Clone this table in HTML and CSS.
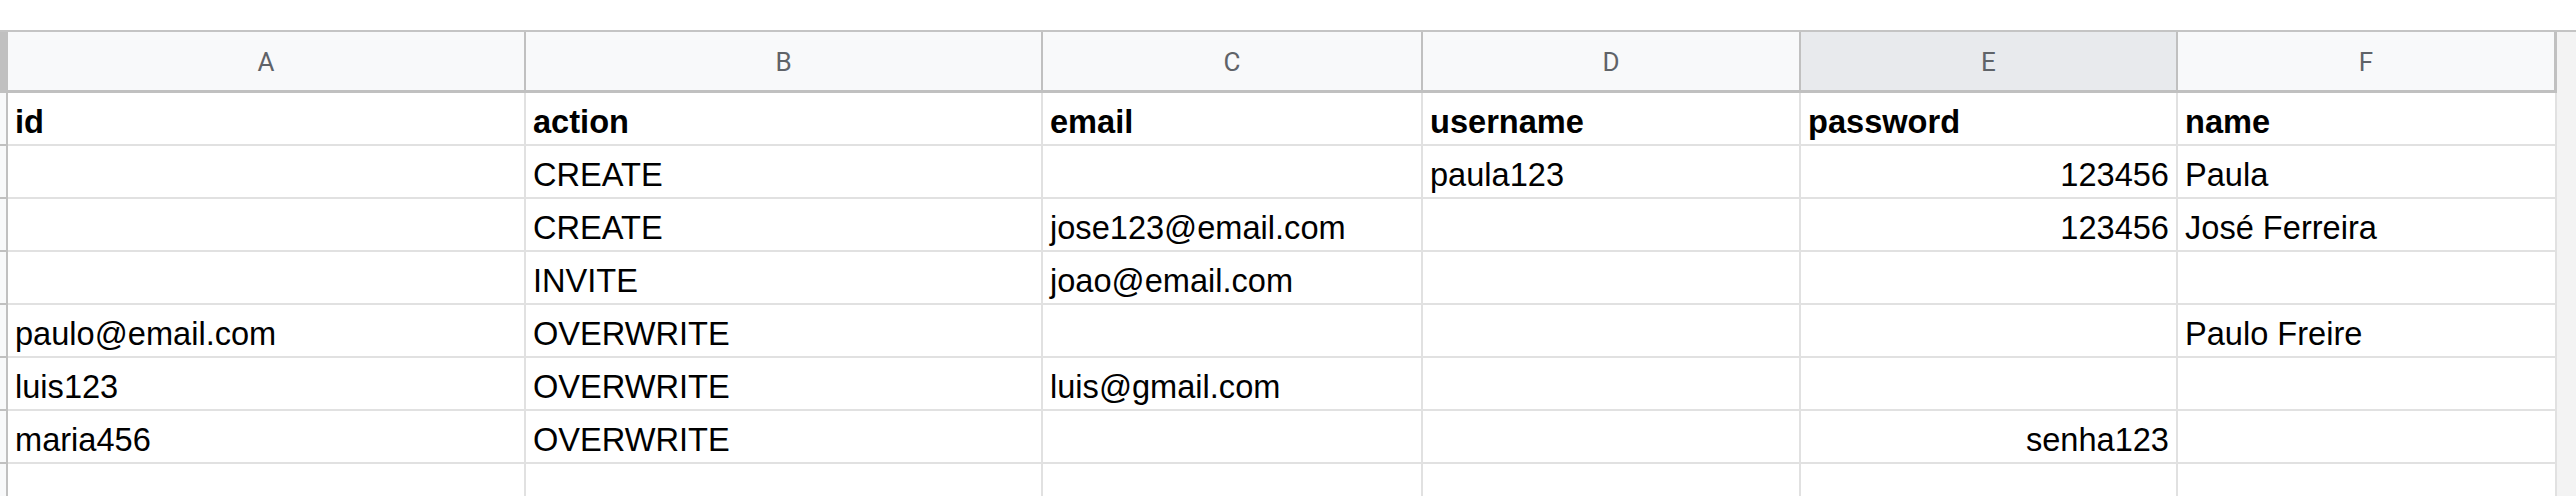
FILE: index.html
```html
<!DOCTYPE html>
<html>
<head>
<meta charset="utf-8">
<link rel="stylesheet" href="styles.css">
</head>
<body>
<div class="sheet">
  <div class="corner"></div>
  <div class="colhead">A</div>
  <div class="colhead">B</div>
  <div class="colhead">C</div>
  <div class="colhead">D</div>
  <div class="colhead active">E</div>
  <div class="colhead last">F</div>
  <div class="track"></div>

  <div class="gut"></div>
  <div class="cell bold">id</div>
  <div class="cell bold">action</div>
  <div class="cell bold">email</div>
  <div class="cell bold">username</div>
  <div class="cell bold">password</div>
  <div class="cell bold">name</div>
  <div class="track"></div>

  <div class="gut"></div>
  <div class="cell"></div>
  <div class="cell">CREATE</div>
  <div class="cell"></div>
  <div class="cell">paula123</div>
  <div class="cell num">123456</div>
  <div class="cell">Paula</div>
  <div class="track"></div>

  <div class="gut"></div>
  <div class="cell"></div>
  <div class="cell">CREATE</div>
  <div class="cell">jose123@email.com</div>
  <div class="cell"></div>
  <div class="cell num">123456</div>
  <div class="cell">José Ferreira</div>
  <div class="track"></div>

  <div class="gut"></div>
  <div class="cell"></div>
  <div class="cell">INVITE</div>
  <div class="cell">joao@email.com</div>
  <div class="cell"></div>
  <div class="cell"></div>
  <div class="cell"></div>
  <div class="track"></div>

  <div class="gut"></div>
  <div class="cell">paulo@email.com</div>
  <div class="cell">OVERWRITE</div>
  <div class="cell"></div>
  <div class="cell"></div>
  <div class="cell"></div>
  <div class="cell">Paulo Freire</div>
  <div class="track"></div>

  <div class="gut"></div>
  <div class="cell">luis123</div>
  <div class="cell">OVERWRITE</div>
  <div class="cell">luis@gmail.com</div>
  <div class="cell"></div>
  <div class="cell"></div>
  <div class="cell"></div>
  <div class="track"></div>

  <div class="gut"></div>
  <div class="cell">maria456</div>
  <div class="cell">OVERWRITE</div>
  <div class="cell"></div>
  <div class="cell"></div>
  <div class="cell num">senha123</div>
  <div class="cell"></div>
  <div class="track"></div>

  <div class="gut"></div>
  <div class="cell"></div>
  <div class="cell"></div>
  <div class="cell"></div>
  <div class="cell"></div>
  <div class="cell"></div>
  <div class="cell"></div>
  <div class="track"></div>
</div>
</body>
</html>
```

FILE: styles.css
```css
html, body {
  margin: 0;
  padding: 0;
  background: #ffffff;
  height: 496px;
  overflow: hidden;
}

body {
  padding-top: 30px;
  box-sizing: border-box;
  font-family: "Liberation Sans", Arial, sans-serif;
}

.sheet {
  display: grid;
  grid-template-columns: 8px 518px 517px 380px 378px 377px 379px 19px;
  grid-template-rows: 61px repeat(8, 53px);
  border-top: 2px solid #c4c4c4;
}

.corner {
  background: #c0c0c0;
  border-bottom: 3px solid #c0c0c0;
}

.colhead {
  background: #f8f9fa;
  border-right: 2px solid #c0c0c0;
  border-bottom: 3px solid #c0c0c0;
  display: flex;
  align-items: center;
  justify-content: center;
  font-family: Roboto, "Liberation Sans", sans-serif;
  font-size: 26px;
  color: #5f6368;
  padding-top: 2px;
}

.colhead.active {
  background: #e8eaed;
}

.colhead.last {
  border-right-width: 3px;
}

.track {
  background: #f3f3f3;
}

.gut {
  background: #f8f9fa;
  border-right: 2px solid #c0c0c0;
  border-bottom: 2px solid #c0c0c0;
}

.cell {
  border-right: 2px solid #e1e1e1;
  border-bottom: 2px solid #e1e1e1;
  display: flex;
  align-items: flex-end;
  padding: 0 7px 3px 7px;
  font-size: 32.6px;
  color: #000000;
  white-space: nowrap;
  overflow: hidden;
}

.cell.bold {
  font-weight: bold;
}

.cell.num {
  justify-content: flex-end;
}
```
